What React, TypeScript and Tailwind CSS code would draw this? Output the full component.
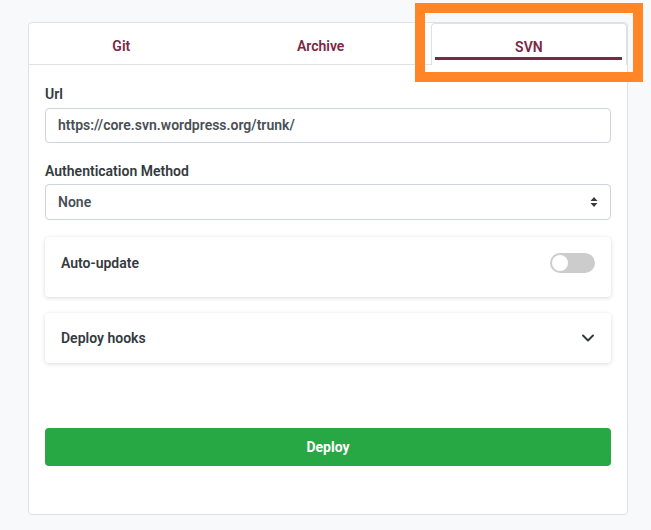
import { useState } from 'react'

const tabs = ['Git', 'Archive', 'SVN']

function Toggle({ on }: { on: boolean }) {
  return (
    <div className={`w-[45px] h-[20px] rounded-full p-[2px] flex ${on ? 'bg-[#28a745] justify-end' : 'bg-[#cccccc] justify-start'}`}>
      <div className="w-[16px] h-[16px] rounded-full bg-white" />
    </div>
  )
}

export default function App() {
  const [active] = useState('SVN')

  return (
    <div className="relative min-h-[530px] bg-[#f8f9fa] pt-[22px] px-[28px] pb-[15px] font-['Roboto',sans-serif]">
      <div className="w-[600px] h-[493px] bg-white border border-[#dee2e6] rounded-[4px] flex flex-col">
        {/* tabs */}
        <div className="flex h-[42px] border-b border-[#dee2e6]">
          {tabs.map(tab => (
            <div
              key={tab}
              className={`flex-auto px-[20px] pt-[6px] flex justify-center items-center text-[14px] font-semibold text-[#7a2843] ${
                tab === active ? 'relative -mb-px bg-white border border-b-0 border-[#dee2e6] rounded-t-[4px] ml-[3px]' : ''
              }`}
            >
              {tab}
              {tab === active && (
                <span className="absolute left-[3px] right-[4px] bottom-[5px] h-[3px] bg-[#7a2843]" />
              )}
            </div>
          ))}
        </div>

        <div className="flex-1 px-[16px] pt-[19px] pb-[48px] flex flex-col">
          <label className="text-[14px] font-semibold text-[#343a40] leading-[20px]">Url</label>
          <div className="mt-[4px] h-[35px] border border-[#ced4da] rounded-[4px] px-[12px] flex items-center text-[14px] font-semibold text-[#495057]">
            https://core.svn.wordpress.org/trunk/
          </div>

          <label className="mt-[18px] text-[14px] font-semibold text-[#343a40] leading-[20px]">Authentication Method</label>
          <div className="mt-[3px] h-[36px] border border-[#ced4da] rounded-[4px] pl-[12px] pr-[12px] flex items-center justify-between text-[14px] font-semibold text-[#495057]">
            <span>None</span>
            <svg width="8" height="12" viewBox="0 0 8 12" fill="#343a40">
              <path d="M4 1 L7.5 5 H0.5 Z" />
              <path d="M4 11 L7.5 7 H0.5 Z" />
            </svg>
          </div>

          <div className="mt-[17px] h-[60px] rounded-[4px] bg-white shadow-[0_1px_4px_rgba(0,0,0,0.15)] px-[16px] pt-[16px] flex justify-between items-start">
            <span className="text-[14px] font-semibold text-[#343a40] leading-[20px]">Auto-update</span>
            <Toggle on={false} />
          </div>

          <div className="mt-[16px] h-[50px] rounded-[4px] bg-white shadow-[0_1px_4px_rgba(0,0,0,0.15)] px-[16px] flex justify-between items-center">
            <span className="text-[14px] font-semibold text-[#343a40]">Deploy hooks</span>
            <svg width="14" height="14" viewBox="0 0 14 14" fill="none" stroke="#343a40" strokeWidth="2" strokeLinecap="round" strokeLinejoin="round">
              <path d="M2 4.5 L7 9.5 L12 4.5" />
            </svg>
          </div>

          <div className="mt-auto h-[38px] rounded-[4px] bg-[#28a745] flex items-center justify-center text-white text-[14px] font-bold">
            Deploy
          </div>
        </div>
      </div>

      {/* highlight box */}
      <div className="absolute left-[415px] top-[3px] w-[228px] h-[79px] border-[10px] border-[#ff8527]" />
    </div>
  )
}
